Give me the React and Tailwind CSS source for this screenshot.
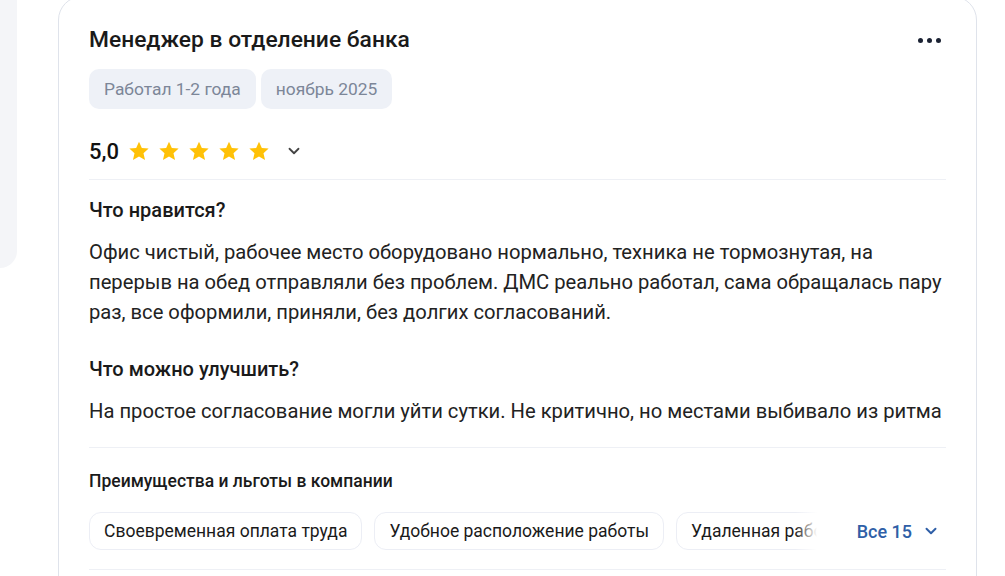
import { ChevronDown } from 'lucide-react';

const benefits = [
  'Своевременная оплата труда',
  'Удобное расположение работы',
  'Удаленная работа',
  'ДМС',
];

function Star() {
  return (
    <svg width="22" height="22" viewBox="0 0 24 24" className="shrink-0">
      <path
        d="M12 1.8l3.1 6.9 7.4.7-5.6 5 1.7 7.4L12 17.9l-6.6 3.9 1.7-7.4-5.6-5 7.4-.7z"
        fill="#ffc107"
      />
    </svg>
  );
}

export default function App() {
  return (
    <div
      className="w-[1005px] h-[576px] overflow-hidden bg-white flex"
      style={{ fontFamily: 'Roboto, "Liberation Sans", sans-serif' }}
    >
      <div className="w-[17px] shrink-0">
        <div className="h-[268px] bg-[#f4f5f8] rounded-br-[20px]" />
      </div>

      <div className="ml-[41px] w-[919px] shrink-0 -mt-[4px] h-[600px] border border-[#dfe3eb] rounded-t-[24px] px-[30px] pt-[29px]">
        <div className="flex items-center justify-between">
          <h1 className="text-[22.8px] leading-[28px] font-medium text-[#1a1a1a]">
            Менеджер в отделение банка
          </h1>
          <div className="flex gap-[4px] mr-[5px]">
            <span className="w-[5px] h-[5px] rounded-full bg-[#1b2233]" />
            <span className="w-[5px] h-[5px] rounded-full bg-[#1b2233]" />
            <span className="w-[5px] h-[5px] rounded-full bg-[#1b2233]" />
          </div>
        </div>

        <div className="flex gap-[5px] mt-[15px]">
          <span className="h-[40px] px-[15px] flex items-center rounded-[10px] bg-[#eef1f7] text-[#7c8698] text-[17.4px]">
            Работал 1-2 года
          </span>
          <span className="h-[40px] px-[15px] flex items-center rounded-[10px] bg-[#eef1f7] text-[#7c8698] text-[17.4px]">
            ноябрь 2025
          </span>
        </div>

        <div className="flex items-center h-[32px] mt-[26px]">
          <span className="text-[22px] font-medium text-[#111] mr-[9px]">5,0</span>
          <div className="flex gap-[8px]">
            <Star />
            <Star />
            <Star />
            <Star />
            <Star />
          </div>
          <ChevronDown size={18} strokeWidth={2.4} className="ml-[15px] text-[#444]" />
        </div>

        <div className="h-px bg-[#eef0f5] mt-[12px]" />

        <h2 className="mt-[18px] text-[20px] leading-[24px] font-medium text-[#1a1a1a]">
          Что нравится?
        </h2>
        <p className="mt-[15px] text-[20.2px] leading-[30px] text-[#222]">
          Офис чистый, рабочее место оборудовано нормально, техника не тормознутая, на
          перерыв на обед отправляли без проблем. ДМС реально работал, сама обращалась пару
          раз, все оформили, приняли, без долгих согласований.
        </p>

        <h2 className="mt-[30px] text-[20px] leading-[24px] font-medium text-[#1a1a1a]">
          Что можно улучшить?
        </h2>
        <p className="mt-[15px] text-[20.2px] leading-[30px] text-[#222] whitespace-nowrap">
          На простое согласование могли уйти сутки. Не критично, но местами выбивало из ритма
        </p>

        <div className="h-px bg-[#eef0f5] mt-[21px]" />

        <h3 className="mt-[22px] text-[17.5px] leading-[22px] font-medium text-[#1a1a1a]">
          Преимущества и льготы в компании
        </h3>

        <div className="flex items-center mt-[20px]">
          <div className="relative w-[728px] overflow-hidden">
            <div className="flex gap-[12px]">
              {benefits.map((b) => (
                <span
                  key={b}
                  className="shrink-0 h-[38px] px-[14px] flex items-center rounded-[12px] border border-[#eceef5] text-[17.5px] text-[#1a1a1a]"
                >
                  {b}
                </span>
              ))}
            </div>
            <div className="absolute right-0 top-0 h-full w-[22px] bg-gradient-to-r from-white/0 to-white" />
          </div>
          <button className="ml-auto flex items-center gap-[10px] text-[18px] font-medium text-[#2f5fa7] mr-[6px]">
            Все 15
            <ChevronDown size={18} strokeWidth={2.6} />
          </button>
        </div>

        <div className="h-px bg-[#eef0f5] mt-[19px]" />
      </div>
    </div>
  );
}
